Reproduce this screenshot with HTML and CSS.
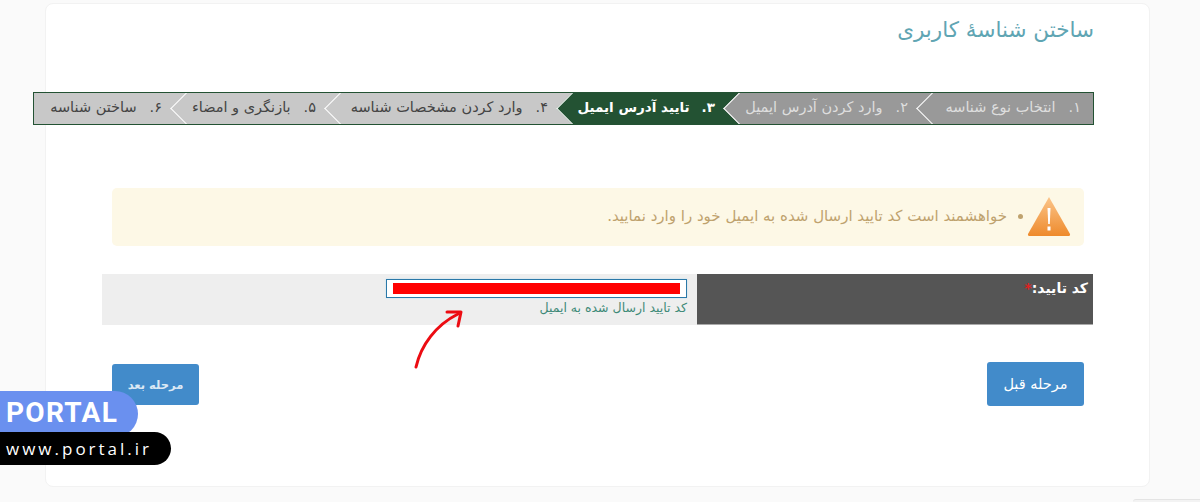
FILE: index.html
```html
<!DOCTYPE html>
<html lang="fa" dir="rtl">
<head>
<meta charset="utf-8">
<title>ساختن شناسهٔ کاربری</title>
<link rel="stylesheet" href="styles.css">
</head>
<body>
<main class="card">
  <h1 class="title">ساختن شناسهٔ کاربری</h1>
  <ol class="steps">
    <li class="step done first"><span class="num">۱.</span><span>انتخاب نوع شناسه</span></li>
    <li class="step done"><span class="num">۲.</span><span>وارد کردن آدرس ایمیل</span></li>
    <li class="step active"><span class="num">۳.</span><span>تایید آدرس ایمیل</span></li>
    <li class="step"><span class="num">۴.</span><span>وارد کردن مشخصات شناسه</span></li>
    <li class="step"><span class="num">۵.</span><span>بازنگری و امضاء</span></li>
    <li class="step last"><span class="num">۶.</span><span>ساختن شناسه</span></li>
  </ol>
  <div class="alert">
    <svg class="alert-icon" width="44" height="41" viewBox="0 0 44 41">
      <defs><linearGradient id="warn" x1="0" y1="0" x2="0" y2="1"><stop offset="0" stop-color="#fbc58a"/><stop offset="1" stop-color="#ee8a2c"/></linearGradient></defs>
      <path d="M22 1 L43 38 Q43.500 40 41 40 L3 40 Q.5 40 1 38 Z" fill="url(#warn)"/>
      <path d="M20.500 12 H23.500 L22.800 28 H21.200 Z" fill="#fff"/>
      <rect x="20.500" y="30.500" width="3" height="4" fill="#fff"/>
    </svg>
    <ul class="alert-list"><li>خواهشمند است کد تایید ارسال شده به ایمیل خود را وارد نمایید.</li></ul>
  </div>
  <div class="form-row">
    <div class="label">کد تایید:<span class="req">*</span></div>
    <div class="field">
      <div class="input"><div class="redact"></div></div>
      <div class="hint">کد تایید ارسال شده به ایمیل</div>
    </div>
  </div>
  <div class="actions">
    <button class="btn prev">مرحله قبل</button>
    <button class="btn next">مرحله بعد</button>
  </div>
</main>
<svg class="arrow" width="60" height="66" viewBox="0 0 60 66">
  <path d="M4 62 C9 40 24 20 46 9" fill="none" stroke="#ec0c12" stroke-width="3" stroke-linecap="round"/>
  <path d="M35 7 L49 7 L46 21" fill="none" stroke="#ec0c12" stroke-width="3" stroke-linecap="round" stroke-linejoin="round"/>
</svg>
<div class="brand" dir="ltr">
  <div class="brand-name">PORTAL</div>
  <div class="brand-url">www.portal.ir</div>
</div>
<div class="corner"></div>
</body>
</html>
```
FILE: styles.css
```css
* { box-sizing: border-box; }
html, body { margin: 0; height: 502px; overflow: hidden; }
body {
  background: #fafafa;
  font-family: "DejaVu Sans", "Noto Sans", sans-serif;
  position: relative;
}
.card {
  width: 1105px;
  height: 484px;
  margin: 3px 50px 0 0;
  padding: 0 55px 0 56px;
  background: #fff;
  border: 1px solid #f2f2f2;
  border-radius: 8px;
}
.title {
  margin: 0;
  padding-top: 10px;
  height: 88px;
  font-size: 21.500px;
  line-height: 32px;
  font-weight: 400;
  color: #5fa5b3;
}
.steps {
  list-style: none;
  margin: 0 0 0 -69px;
  padding: 0;
  height: 33px;
  display: grid;
  grid-template-columns: 161px 193px 167px 232px 154px 1fr;
  border: 1px solid #235233;
  overflow: hidden;
}
.step {
  position: relative;
  display: flex;
  align-items: center;
  gap: 13px;
  padding: 0 24px 3px 0;
  background: #c8c8c8;
  color: #444;
  font-size: 14.500px;
  white-space: nowrap;
}
.step.first { padding-right: 12px; }
.step::after {
  content: "";
  position: absolute;
  left: -11px;
  top: 4px;
  width: 22px;
  height: 22px;
  background: inherit;
  border-left: 1px solid #fff;
  border-bottom: 1px solid #fff;
  transform: rotate(45deg);
  z-index: 1;
}
.step.last::after { display: none; }
.step > span { position: relative; z-index: 2; }
.step.done { background: #999; color: #dedede; }
.step.active {
  background: #235233;
  color: #fff;
  font-weight: 700;
  font-size: 13.500px;
  gap: 12px;
}
.alert {
  margin: 63px 10px 0;
  height: 58px;
  display: flex;
  align-items: center;
  gap: 7px;
  padding: 0 13px 2px 0;
  background: #fdf8e6;
  border-radius: 5px;
  color: #bfa26e;
  font-size: 15px;
}
.alert-icon { flex: none; }
.alert-list { margin: 0; padding: 0 13px 0 0; }
.form-row {
  margin: 28px 1px 0 0;
  height: 51px;
  display: grid;
  grid-template-columns: 396px 1fr;
}
.label {
  background: #555;
  color: #fff;
  font-size: 14px;
  font-weight: 700;
  padding: 6px 5px 0 0;
  border-bottom: 1px solid #aaa;
}
.req { color: #e02020; }
.field {
  background: #eee;
  padding: 5px 10px 0 0;
}
.input {
  width: 301px;
  height: 19px;
  padding: 3px 6px;
  background: #fff;
  border: 1px solid #2a78a8;
  box-shadow: 0 0 2px #bfe0f0;
}
.redact { height: 11px; background: #f00; }
.hint {
  margin-top: 2px;
  color: #3f8a78;
  font-size: 12.500px;
  line-height: 16px;
}
.actions {
  margin: 37px 10px 0;
  display: flex;
  justify-content: space-between;
  align-items: flex-start;
}
.btn {
  border: 0;
  border-radius: 3px;
  background: #428bca;
  color: #fff;
  font-family: inherit;
  padding: 0;
}
.prev { width: 97px; height: 44px; font-size: 14.500px; }
.next { width: 87px; height: 41px; margin-top: 2px; font-size: 11.500px; font-weight: 700; color: #dbe8f4; }
.arrow { position: absolute; left: 412px; top: 305px; }
.brand { position: absolute; left: 0; top: 391px; }
.brand-name {
  width: 138px;
  height: 46px;
  padding: 1px 0 0 6px;
  background: #6a90ef;
  border-radius: 0 23px 23px 0;
  color: #fff;
  font-family: Roboto, sans-serif;
  font-weight: 700;
  font-size: 28px;
  line-height: 42px;
  letter-spacing: 1.300px;
}
.brand-url {
  position: relative;
  width: 171px;
  height: 33px;
  margin-top: -5px;
  padding-left: 6px;
  background: #000;
  border-radius: 0 17px 17px 0;
  color: #fff;
  font-family: "Open Sans", sans-serif;
  font-size: 17px;
  line-height: 33px;
  letter-spacing: 3px;
}
.corner {
  position: absolute;
  right: 0;
  bottom: 0;
  width: 67px;
  height: 3px;
  background: #f3f3f3;
  border-top: 1px solid #e4e4e4;
  border-radius: 3px 0 0 0;
}
```
